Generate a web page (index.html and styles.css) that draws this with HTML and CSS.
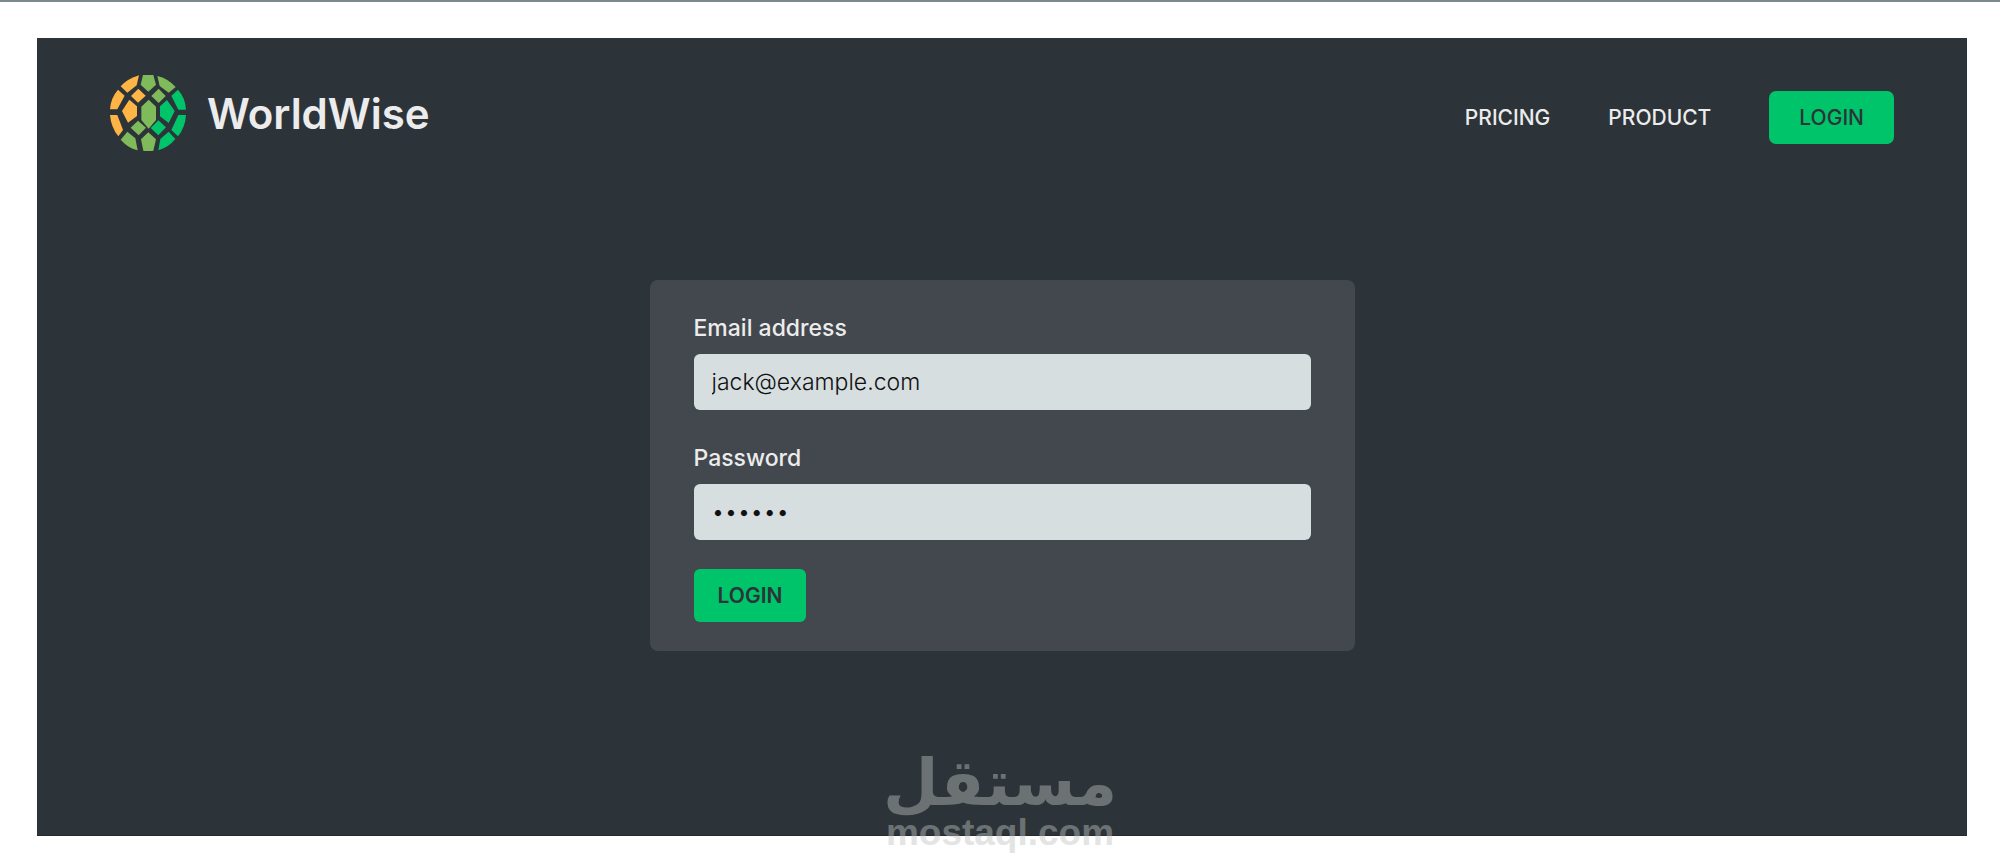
FILE: index.html
```html
<!DOCTYPE html>
<html lang="en">
<head>
    <meta charset="UTF-8">
    <title>WorldWise</title>
    <meta name="viewport" content="width=device-width, initial-scale=1.0">
    <link rel="stylesheet" href="styles.css">
</head>
<body>
    <main class="login">
        <header class="header">
            <a href="#" class="logo">
                <svg class="logo-mark" viewBox="30 29 228 228" aria-hidden="true">
                    <g fill="#ffb545">
                        <path d="M62 63Q83 40 117 30L110 60L82 82Z"/>
                        <path d="M54 73L74 91L52 132H30Q32 98 54 73Z"/>
                        <path d="M30 149H52L69 194L55 213Q33 186 30 149Z"/>
                        <path d="M115 70L137 91L114 112L93 92Z"/>
                        <path d="M88 103L111 123V152L84 172L66 137Z"/>
                    </g>
                    <g fill="#7fbb5a">
                        <path d="M129 29Q145 26 160 29L168 58L145 79L122 58Z"/>
                        <path d="M172 32Q203 39 227 65L206 82L179 62Z"/>
                        <path d="M176 70L197 92L176 113L154 92Z"/>
                        <path d="M146 103L168 124V164L146 190L124 164V124Z"/>
                        <path d="M114 166L138 187L116 210L92 187Z"/>
                        <path d="M82 199L106 219L113 255Q84 248 62 223Z"/>
                        <path d="M145 201L168 222L160 256Q145 259 130 256L123 222Z"/>
                    </g>
                    <g fill="#00c46a">
                        <path d="M234 73Q256 97 258 133H235L214 91Z"/>
                        <path d="M201 104L224 137L206 173L180 153V123Z"/>
                        <path d="M175 165L198 186L175 210L152 188Z"/>
                        <path d="M235 149H258Q256 186 234 213L214 194Z"/>
                        <path d="M206 199L226 221Q206 246 175 255L181 221Z"/>
                    </g>
                </svg>
                <span>WorldWise</span>
            </a>
            <nav class="nav">
                <a href="#">PRICING</a>
                <a href="#">PRODUCT</a>
                <a href="#" class="cta-link">LOGIN</a>
            </nav>
        </header>

        <form class="form">
            <div class="row">
                <label for="email">Email address</label>
                <input type="email" id="email" value="jack@example.com">
            </div>
            <div class="row">
                <label for="password">Password</label>
                <input type="password" id="password" value="qwerty">
            </div>
            <button type="button">LOGIN</button>
        </form>

        <div class="watermark">
            <span class="watermark-ar" lang="ar" dir="rtl">مستقل</span>
            <span class="watermark-en">mostaql.com</span>
        </div>
    </main>
</body>
</html>
```

FILE: styles.css
```css
* {
    box-sizing: border-box;
}
body {
    margin: 0;
    padding: 36px 33px 32px 37px;
    min-height: 100vh;
    border-top: 2px solid #7c898f;
    background-color: #fff;
    color: #ececec;
    font-family: Inter, sans-serif;
    display: flex;
}
.login {
    position: relative;
    flex: 1;
    padding: 37px 73px;
    background-color: #2d3439;
    border-bottom: 1px solid #242a2e;
}
.header {
    display: flex;
    justify-content: space-between;
    align-items: center;
}
.logo {
    display: flex;
    align-items: center;
    gap: 21px;
    color: #ececec;
    font-size: 42px;
    font-weight: 600;
    text-decoration: none;
}
.logo-mark {
    width: 76px;
    height: 76px;
}
.nav {
    display: flex;
    align-items: center;
    gap: 58px;
    padding-top: 9px;
}
.nav a {
    color: #ececec;
    font-size: 21px;
    font-weight: 500;
    text-decoration: none;
}
.nav .cta-link {
    padding: 0 30px;
    border-radius: 7px;
    background-color: #00c46a;
    color: #2d3439;
    line-height: 53px;
}
.form {
    display: flex;
    flex-direction: column;
    align-items: flex-start;
    gap: 29px;
    width: 100%;
    max-width: 705px;
    margin: 129px auto 0;
    padding: 29px 44px;
    border-radius: 8px;
    background-color: #42484d;
}
.row {
    display: flex;
    flex-direction: column;
    gap: 7px;
    width: 100%;
}
.row label {
    font-size: 23px;
    font-weight: 500;
    line-height: 38px;
}
.row input {
    width: 100%;
    height: 56px;
    padding: 0 18px;
    border: none;
    border-radius: 6px;
    background-color: #d6dee0;
    color: #111;
    font-family: inherit;
    font-size: 23px;
    font-weight: 300;
}
.form button {
    height: 53px;
    padding: 0 24px;
    border: none;
    border-radius: 6px;
    background-color: #00c46a;
    color: #2d3439;
    font-family: inherit;
    font-size: 21px;
    font-weight: 600;
    cursor: pointer;
}
/* Sits over the bottom edge of the panel */
.watermark {
    position: absolute;
    left: 0;
    right: 4px;
    bottom: -20px;
    display: flex;
    flex-direction: column;
    align-items: center;
    color: #bfc1c2;
    font-weight: 700;
    opacity: 0.43;
    pointer-events: none;
}
.watermark-ar {
    font-family: "DejaVu Sans", sans-serif;
    font-size: 64px;
    line-height: 56px;
}
.watermark-en {
    font-family: "Liberation Sans", sans-serif;
    font-size: 37px;
    line-height: 44px;
}
```
